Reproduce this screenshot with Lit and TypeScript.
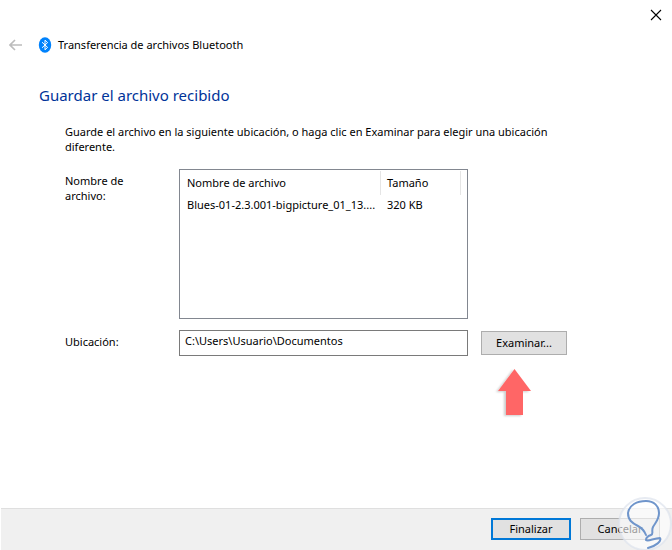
import { LitElement, html, css } from "lit";
import { customElement, property, state } from "lit/decorators.js";

interface ReceivedFile {
  name: string;
  size: string;
}

@customElement("app-root")
export class AppRoot extends LitElement {
  @property({ attribute: false })
  files: ReceivedFile[] = [{ name: "Blues-01-2.3.001-bigpicture_01_13....", size: "320 KB" }];

  @state()
  private location = "C:\\Users\\Usuario\\Documentos";

  static styles = css`
    :host {
      display: flex;
      flex-direction: column;
      box-sizing: border-box;
      min-height: 100vh;
      padding-left: 1px;
      background: #fff;
      color: #000;
      font: 11px/15px "Noto Sans", "Open Sans", sans-serif;
    }
    button,
    input {
      box-sizing: border-box;
      margin: 0;
      font: inherit;
      color: inherit;
    }
    svg {
      display: block;
    }
    .titlebar {
      display: flex;
      justify-content: flex-end;
      height: 30px;
    }
    .icon-button {
      display: flex;
      align-items: center;
      justify-content: center;
      padding: 0;
      border: 0;
      background: none;
    }
    .close {
      width: 32px;
      height: 30px;
    }
    .header {
      display: flex;
      align-items: center;
      height: 30px;
      padding-left: 8px;
    }
    .back {
      width: 14px;
      height: 16px;
      margin-right: 15px;
    }
    .logo {
      margin-right: 6px;
    }
    .title {
      margin: 0;
      padding-bottom: 2px;
      font-size: 11px;
      font-weight: 400;
    }
    main {
      flex: 1;
      padding: 23px 105px 24px 38px;
    }
    h2 {
      margin: 0;
      font-size: 15px;
      line-height: 24px;
      font-weight: 400;
      color: #003399;
    }
    .intro {
      margin: 17px 0 15px 26px;
    }
    .form {
      display: grid;
      grid-template-columns: 114px minmax(0, 1fr) 86px;
      row-gap: 11px;
      margin-left: 26px;
    }
    .caption {
      width: 72px;
      padding-top: 4px;
    }
    .list {
      box-sizing: border-box;
      height: 150px;
      margin-right: 13px;
      padding: 1px;
      border: 1px solid #828790;
    }
    table {
      width: 100%;
      table-layout: fixed;
      border-collapse: separate;
      border-spacing: 0;
    }
    th,
    td {
      padding: 0 0 2px 6px;
      text-align: left;
      font-weight: 400;
      white-space: nowrap;
    }
    th {
      height: 22px;
      border-right: 1px solid #e5e5e5;
    }
    td {
      height: 18px;
    }
    .col-size {
      width: 80px;
    }
    .col-rest {
      width: 5px;
    }
    th.blank {
      padding: 0;
      border: 0;
    }
    .path {
      height: 26px;
      margin-right: 13px;
      padding: 0 5px 5px;
      border: 1px solid #7a7a7a;
      background: #fff;
    }
    .button {
      height: 24px;
      padding: 0 0 2px;
      border: 1px solid #adadad;
      background: #e1e1e1;
    }
    .browse {
      position: relative;
      padding-top: 1px;
    }
    .browse .button {
      width: 100%;
    }
    .pointer {
      position: absolute;
      left: 12px;
      top: 36px;
    }
    footer {
      position: relative;
      display: flex;
      justify-content: flex-end;
      gap: 9px;
      padding: 9px 12px 10px;
      border-top: 1px solid #dfdfdf;
      background: #f0f0f0;
    }
    footer .button {
      width: 80px;
      height: 22px;
    }
    footer .primary {
      border: 2px solid #0078d7;
    }
    .seal {
      position: absolute;
      right: 0;
      bottom: 0;
      pointer-events: none;
    }
  `;

  render() {
    return html`
      <div class="titlebar">
        <button class="icon-button close" aria-label="Cerrar">
          <svg width="12" height="12" viewBox="0 0 12 12">
            <path d="M1 1L11 11M11 1L1 11" stroke="#000" stroke-width="1.1" fill="none" />
          </svg>
        </button>
      </div>
      <header class="header">
        <button class="icon-button back" aria-label="Atrás" disabled>
          <svg width="14" height="12" viewBox="0 0 14 12">
            <path d="M6 1L1 6L6 11M1 6H13" stroke="#bcbcbc" stroke-width="1.6" fill="none" />
          </svg>
        </button>
        <svg class="logo" width="14" height="16" viewBox="0 0 14 16">
          <ellipse cx="7" cy="8" rx="6.2" ry="7.8" fill="#0082fc" />
          <path d="M4 5.2L9.6 10.4L7 12.8V3.2L9.6 5.6L4 10.8" stroke="#fff" stroke-width="1" fill="none" />
        </svg>
        <h1 class="title">Transferencia de archivos Bluetooth</h1>
      </header>
      <main>
        <h2>Guardar el archivo recibido</h2>
        <p class="intro">
          Guarde el archivo en la siguiente ubicación, o haga clic en Examinar para elegir una ubicación diferente.
        </p>
        <div class="form">
          <div class="caption" id="files-label">Nombre de archivo:</div>
          <div class="list">
            <table aria-labelledby="files-label">
              <colgroup>
                <col />
                <col class="col-size" />
                <col class="col-rest" />
              </colgroup>
              <thead>
                <tr>
                  <th scope="col">Nombre de archivo</th>
                  <th scope="col">Tamaño</th>
                  <th class="blank"></th>
                </tr>
              </thead>
              <tbody>
                ${this.files.map((f) => html`<tr><td>${f.name}</td><td colspan="2">${f.size}</td></tr>`)}
              </tbody>
            </table>
          </div>
          <div></div>
          <label class="caption" for="location">Ubicación:</label>
          <input
            class="path"
            id="location"
            type="text"
            .value=${this.location}
            @input=${(e: Event) => (this.location = (e.target as HTMLInputElement).value)}
          />
          <div class="browse">
            <button class="button">Examinar...</button>
            <svg class="pointer" width="44" height="54" viewBox="0 0 44 54">
              <defs>
                <filter id="shade" x="-20%" y="-20%" width="140%" height="140%">
                  <feDropShadow dx="-2" dy="1" stdDeviation="1.2" flood-color="#000" flood-opacity="0.2" />
                </filter>
              </defs>
              <path d="M21.500 3L38 25H30V49H13V25H5Z" fill="#ff6666" filter="url(#shade)" />
            </svg>
          </div>
        </div>
      </main>
      <footer>
        <button class="button primary">Finalizar</button>
        <button class="button">Cancelar</button>
        <svg class="seal" width="56" height="56" viewBox="0 0 56 56">
          <circle cx="29" cy="30" r="26" fill="#fff" fill-opacity="0.6" stroke="#dde3ed" stroke-opacity="0.7" stroke-width="2" />
          <path
            d="M30 41C28 36 26 34 22 32C16 29 12 26 12 19C13 11 21 7 30 7C38 7 43 12 43 19C43 26 39 29 37 33C35 37 38 40 35 41C32 42 30 44 30 46C32 48 38 44 44 44C46 47 40 52 32 54"
            stroke="#6f95cb" stroke-width="2" fill="none" stroke-linecap="round" stroke-linejoin="round"
          />
        </svg>
      </footer>
    `;
  }
}
